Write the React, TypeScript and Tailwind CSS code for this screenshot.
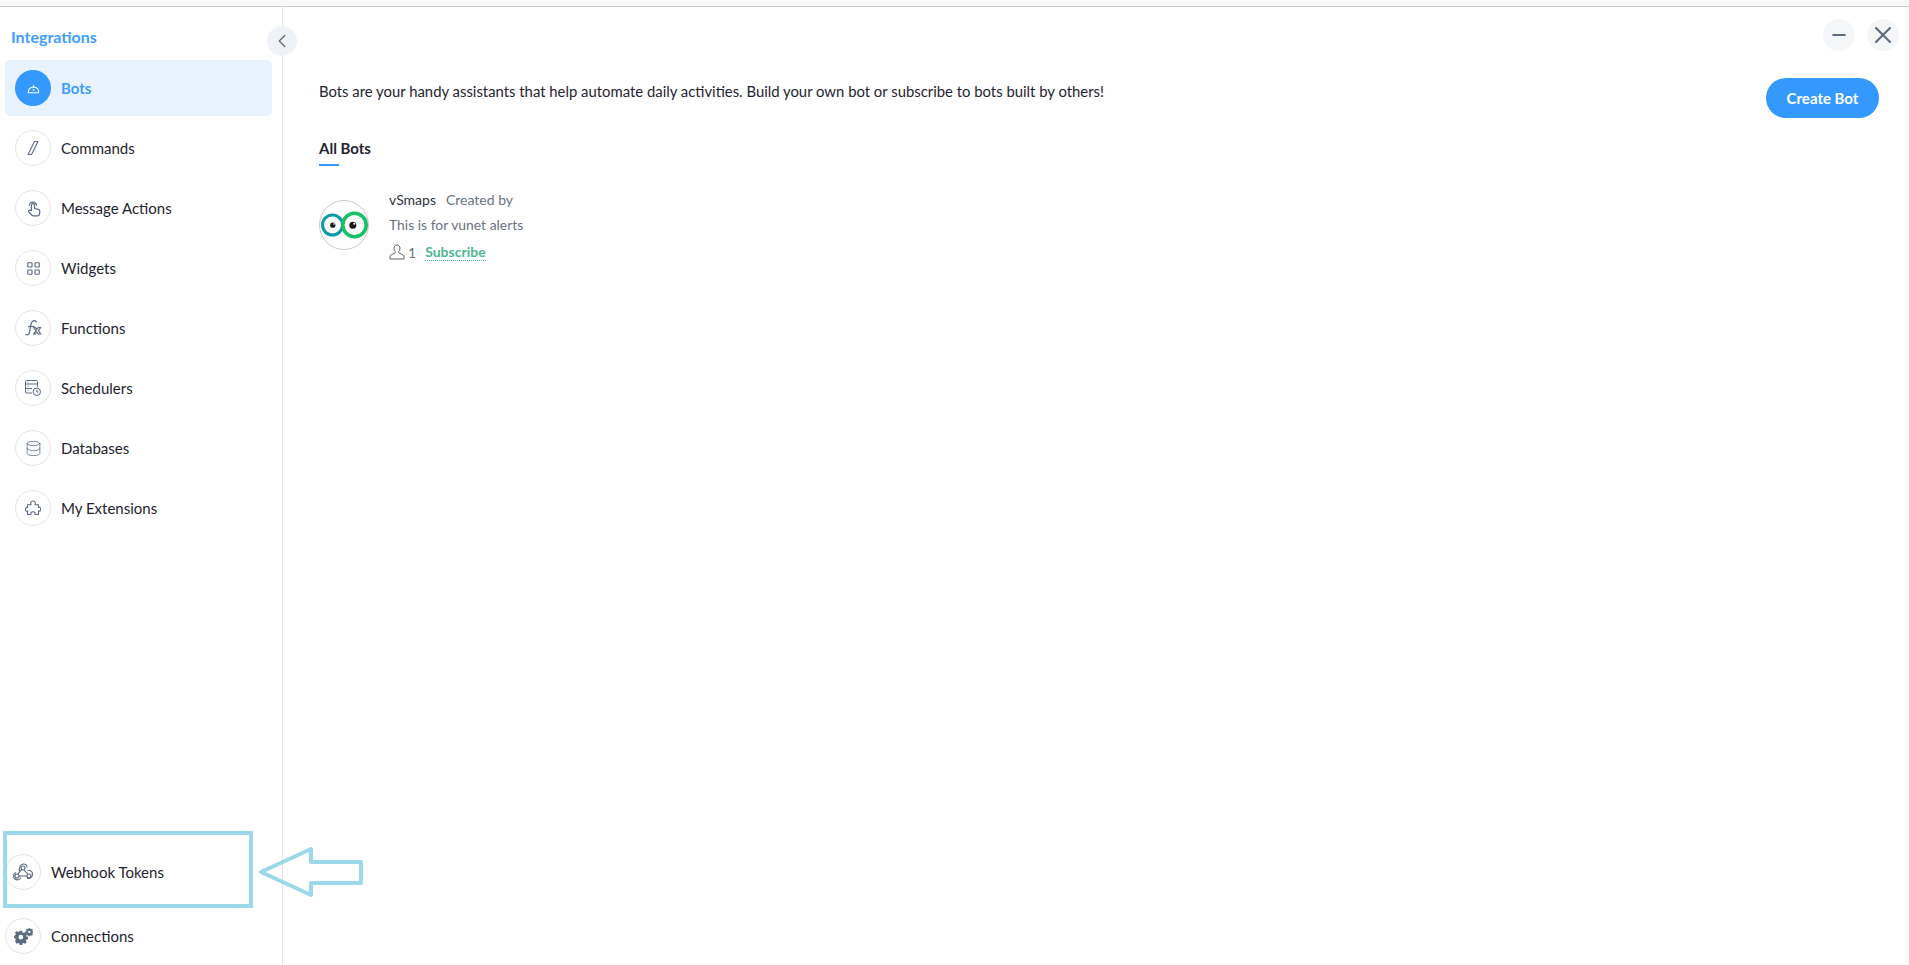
import { ChevronLeft, Database, Minus, X } from 'lucide-react'
import type { ReactNode } from 'react'

function BotIcon({ className }: { className?: string }) {
  return (
    <svg viewBox="0 0 16 16" className={className} fill="none" stroke="currentColor" strokeWidth="1.2">
      <path d="M2.500 12.500h11c.4-3.400-2-6-5.500-6s-5.900 2.600-5.500 6z" strokeLinejoin="round" />
      <path d="M8 6.500V4.500" />
      <circle cx="8" cy="9.500" r=".9" fill="currentColor" stroke="none" />
    </svg>
  )
}

function SlashIcon() {
  return (
    <svg viewBox="0 0 16 16" className="w-4 h-4 text-[#5b6b82]" fill="none" stroke="currentColor" strokeWidth="1.1">
      <path d="M9.500 1.500H13L6.500 14.500H3z" strokeLinejoin="round" />
    </svg>
  )
}

function HandIcon() {
  return (
    <svg viewBox="0 0 18 18" className="w-[19px] h-[19px] text-[#5b6b82]" fill="none" stroke="currentColor" strokeWidth="1.15">
      <path d="M5 6.500a3.500 3.500 0 1 1 7 0" />
      <path
        d="M7 11V5.800a1.500 1.500 0 0 1 3 0V9l3.600.9c1 .3 1.500 1 1.400 2l-.4 2.600c-.2 1-1 1.500-2 1.500H9c-.7 0-1.200-.3-1.600-.8L4.500 12.300c-.8-1 .5-2.300 1.500-1.400z"
        strokeLinejoin="round"
      />
    </svg>
  )
}

function WidgetsIcon() {
  return (
    <svg viewBox="0 0 14 14" className="w-[13px] h-[13px] text-[#5b6b82]" fill="none" stroke="currentColor" strokeWidth="1.2">
      <rect x=".8" y=".8" width="4.600" height="4.600" rx=".5" />
      <rect x="8.600" y=".8" width="4.600" height="4.600" rx=".5" />
      <rect x=".8" y="8.600" width="4.600" height="4.600" rx=".5" />
      <rect x="8.600" y="8.600" width="4.600" height="4.600" rx=".5" />
    </svg>
  )
}

function FunctionIcon() {
  return (
    <svg viewBox="0 0 18 18" className="w-[18px] h-[18px] text-[#5b6b82]" fill="none" stroke="currentColor" strokeWidth="1.2">
      <path d="M1.500 15c.8 1.300 2.800 1.200 3.600-.5.900-2 1-5.500 1.700-8.500.6-2.500 1.800-4.300 3.500-4.300 1.300 0 2 .8 1.800 1.800" />
      <path d="M4 7.500h6.500" />
      <path d="M9.500 8.500h2l1.300 2 1.500-2h2.500l-2.500 3.200 2.500 3.300h-2.500l-1.500-2-1.500 2H9.500l2.500-3.300z" strokeLinejoin="round" />
    </svg>
  )
}

function SchedulerIcon() {
  return (
    <svg viewBox="0 0 18 18" className="w-[18px] h-[18px] text-[#5b6b82]" fill="none" stroke="currentColor" strokeWidth="1">
      <path d="M8 14H2.500a1 1 0 0 1-1-1V2.500a1 1 0 0 1 1-1h10a1 1 0 0 1 1 1V8" />
      <path d="M1.500 5h12M1.500 9.500h6.500M3.500 3.200h1M3.500 7.200h1M3.500 11.700h1" />
      <circle cx="12.800" cy="12.800" r="3.700" />
      <path d="M12.800 10.800v2.200h1.800" />
    </svg>
  )
}

function PuzzleIcon() {
  return (
    <svg viewBox="0 0 16 16" className="w-4 h-4 text-[#5b6b82]" fill="none" stroke="currentColor" strokeWidth="1.1">
      <path
        d="M2.500 4.800H6C5.700 4 5.500 3.500 5.700 2.800 6 1.500 7 1 8 1s2 .5 2.300 1.800C10.500 3.500 10.300 4 10 4.800H13.500V7.600C14 7.300 14.500 7.200 15 7.500c.6.3.8 1 .8 1.700s-.2 1.400-.8 1.700c-.5.3-1 .2-1.500-.1V14.500H10c.3-.8.3-1.300 0-1.800-.4-.7-1.200-1-2-1s-1.600.3-2 1c-.3.5-.3 1 0 1.800H2.500V11c-.6.3-1 .3-1.300 0-.5-.4-.7-1-.7-1.700s.2-1.300.7-1.700c.3-.3.7-.3 1.300 0z"
        strokeLinejoin="round"
      />
    </svg>
  )
}

function WebhookIcon() {
  return (
    <svg viewBox="0 0 20 18" className="w-5 h-[18px] text-[#5b6b82]" fill="none" stroke="currentColor" strokeWidth="1.1">
      <circle cx="10" cy="5" r="2" />
      <circle cx="4" cy="13" r="2" />
      <circle cx="16" cy="13" r="2" />
      <path d="M6 13h8" />
      <path d="M11 6.800 15 11.500" />
      <path d="M4.800 11.200 8.600 6.500" />
      <path d="M6.500 8.500C5.800 4.500 7.500 1 10.300 1c2.300 0 3.700 1.500 3.700 3.500" />
      <path d="M14.500 7.500c3-.8 5 1.300 5 3.700 0 2.800-2.500 4.800-5.500 4" />
      <path d="M8 14.800C6.500 17 3.500 17.500 1.800 16-.2 14.200.3 11 2.800 9.500" />
    </svg>
  )
}

function GearsIcon() {
  return (
    <svg viewBox="0 0 20 18" className="w-[19px] h-[17px] text-[#5b6b82]" fill="currentColor">
      <path
        fillRule="evenodd"
        d="M6 3h2.500l.4 1.700 1.300.6 1.500-.9 1.700 1.700-.9 1.500.6 1.300 1.700.4v2.500l-1.700.4-.6 1.300.9 1.500-1.700 1.700-1.500-.9-1.300.6-.4 1.600H6l-.4-1.600-1.300-.6-1.500.9L1 13.900l.9-1.500-.6-1.300-1.300-.4V8.200l1.300-.4.6-1.300L1 5l1.800-1.700 1.500.9 1.300-.6zM7.200 7.200a2.500 2.500 0 1 0 0 5 2.500 2.500 0 0 0 0-5z"
      />
      <path
        fillRule="evenodd"
        d="M15.500 0h1.500l.2 1 .8.300.9-.5 1 1-.5.900.3.800.8.200v1.500l-.8.200-.3.800.5.900-1 1-.9-.5-.8.300-.2.800h-1.500l-.2-.8-.8-.3-.9.500-1-1 .5-.9-.3-.8-1-.2V3.700l1-.2.3-.8-.5-.9 1-1 .9.500.8-.3zM16.200 2.800a1.300 1.300 0 1 0 0 2.600 1.300 1.300 0 0 0 0-2.600z"
      />
    </svg>
  )
}

function PersonIcon() {
  return (
    <svg viewBox="0 0 16 16" className="w-4 h-4 text-[#5b6572]" fill="none" stroke="currentColor" strokeWidth="1">
      <path
        d="M8 1c-2 0-3 1.500-3 3.400 0 1.500.7 2.500 1.300 3.200.3.400.2 1-.2 1.300L2 11c-.6.300-1 .8-1 1.500V15h14v-2.500c0-.7-.4-1.200-1-1.500L9.900 8.900c-.4-.3-.5-.9-.2-1.300.6-.7 1.300-1.700 1.300-3.200C11 2.500 10 1 8 1z"
        strokeLinejoin="round"
      />
    </svg>
  )
}

function Logo() {
  return (
    <svg viewBox="0 0 50 50" className="w-[50px] h-[50px]">
      <circle cx="25" cy="25" r="24.500" fill="#fff" stroke="#c8c8c8" />
      <circle cx="13.500" cy="25" r="10" fill="#fff" stroke="#0f9aa8" strokeWidth="3" />
      <circle cx="35.500" cy="25" r="11.700" fill="#fff" stroke="#16c265" strokeWidth="3.600" />
      <circle cx="13.800" cy="25.200" r="2.600" fill="#1c1c1c" />
      <circle cx="33.800" cy="25.200" r="3.500" fill="#1c1c1c" />
      <circle cx="15" cy="24" r=".8" fill="#fff" />
      <circle cx="35.300" cy="23.800" r="1" fill="#fff" />
    </svg>
  )
}

const items: { label: string; icon: ReactNode }[] = [
  { label: 'Commands', icon: <SlashIcon /> },
  { label: 'Message Actions', icon: <HandIcon /> },
  { label: 'Widgets', icon: <WidgetsIcon /> },
  { label: 'Functions', icon: <FunctionIcon /> },
  { label: 'Schedulers', icon: <SchedulerIcon /> },
  { label: 'Databases', icon: <Database size={17} strokeWidth={1.1} className="text-[#5b6b82]" /> },
  { label: 'My Extensions', icon: <PuzzleIcon /> },
]

export default function App() {
  return (
    <div className="relative flex flex-col h-[965px] w-[1909px] overflow-hidden bg-white text-[#1f2430] font-['Lato','Liberation_Sans',sans-serif]">
      <div className="h-[7px] shrink-0 bg-[#f8f8f8] border-b border-[#cccccc]" />
      <div className="flex flex-1 min-h-0">
        {/* sidebar */}
        <aside className="relative w-[283px] shrink-0 border-r border-[#e4e4e4] flex flex-col">
          <div className="pl-[11px] pt-[21px] h-[53px] text-[16px] leading-[18px] font-bold text-[#3d9eff]">
            Integrations
          </div>
          <div className="mx-[5px] w-[267px] h-[56px] rounded-[5px] bg-[#e8f3ff] flex items-center pl-[10px] gap-[10px]">
            <div className="w-9 h-9 rounded-full bg-[#3399ff] flex items-center justify-center text-white">
              <BotIcon className="w-[15px] h-[15px]" />
            </div>
            <span className="text-[15px] font-bold text-[#3d9eff]">Bots</span>
          </div>
          <div className="mt-[2px] flex flex-col">
            {items.map((item) => (
              <div key={item.label} className="h-[60px] flex items-center pl-[15px] gap-[10px]">
                <div className="w-9 h-9 rounded-full border border-[#e5e5e5] flex items-center justify-center">
                  {item.icon}
                </div>
                <span className="text-[15px]">{item.label}</span>
              </div>
            ))}
          </div>
          <div className="mt-auto flex flex-col gap-[6px]">
            <div className="h-[58px] flex items-center pl-[5px] gap-[10px]">
              <div className="w-9 h-9 rounded-full border border-[#e5e5e5] flex items-center justify-center">
                <WebhookIcon />
              </div>
              <span className="text-[15px]">Webhook Tokens</span>
            </div>
            <div className="h-[58px] flex items-center pl-[5px] gap-[10px]">
              <div className="w-9 h-9 rounded-full border border-[#e5e5e5] flex items-center justify-center">
                <GearsIcon />
              </div>
              <span className="text-[15px]">Connections</span>
            </div>
          </div>
          <button className="absolute right-[-15px] top-[19px] w-[30px] h-[30px] rounded-full bg-[#eff3f7] flex items-center justify-center text-[#5b6b82]">
            <ChevronLeft size={22} strokeWidth={1.4} />
          </button>
        </aside>

        {/* main */}
        <main className="relative flex-1 min-w-0 pl-[36px] pr-[26px]">
          <div className="absolute right-[6px] top-[12px] flex gap-[12px]">
            <button className="w-8 h-8 rounded-full bg-[#f5f6f8] flex items-center justify-center text-[#5b6b82]">
              <Minus size={20} strokeWidth={2.4} />
            </button>
            <button className="w-8 h-8 rounded-full bg-[#f5f6f8] flex items-center justify-center text-[#5b6b82]">
              <X size={28} strokeWidth={1.8} />
            </button>
          </div>
          <div className="flex items-start justify-between pt-[72px]">
            <p className="mt-[1px] text-[14.86px] leading-[22px]">
              Bots are your handy assistants that help automate daily activities. Build your own bot or subscribe to bots built by others!
            </p>
            <button className="mt-[-1px] w-[113px] h-[40px] rounded-full bg-[#3399ff] text-white text-[15px] font-bold">
              Create Bot
            </button>
          </div>
          <div className="mt-[20px] w-fit">
            <div className="text-[15px] leading-[20px] font-bold">All Bots</div>
            <div className="mt-[6px] w-5 h-[2px] bg-[#3399ff]" />
          </div>
          <div className="mt-[20px] flex items-start gap-5">
            <div className="mt-[14px]">
              <Logo />
            </div>
            <div className="flex flex-col text-[14px] text-[#6b7280]">
              <div className="h-[26px] flex items-center gap-[10px]">
                <span className="text-[#2d3340]">vSmaps</span>
                <span>Created by</span>
              </div>
              <div className="h-[26px] flex items-center text-[13.9px]">This is for vunet alerts</div>
              <div className="h-[28px] flex items-center">
                <PersonIcon />
                <span className="ml-[3px]">1</span>
                <span className="ml-[9px] font-bold text-[#4fb88f] border-b border-dotted border-[#4fb88f] leading-[16px]">
                  Subscribe
                </span>
              </div>
            </div>
          </div>
        </main>
        <div className="w-[4px] shrink-0 bg-[#fafafa]" />
      </div>

      {/* annotation */}
      <div className="absolute left-[3px] top-[831px] w-[250px] h-[77px] border-[4px] border-[#9bd8ea]" />
      <svg className="absolute left-[256px] top-[844px] w-[112px] h-[58px]" viewBox="0 0 112 58" fill="none" stroke="#9bd8ea" strokeWidth="4" strokeLinejoin="round">
        <path d="M5 28 55 5V18H105V39H55V51Z" />
      </svg>
    </div>
  )
}
